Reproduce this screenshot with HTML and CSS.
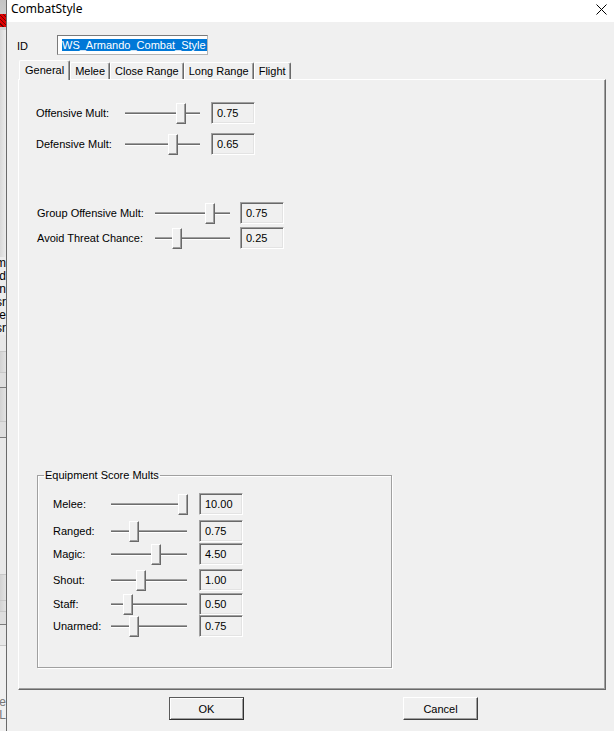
FILE: index.html
```html
<!DOCTYPE html>
<html lang="en">
<head>
  <meta charset="UTF-8" />
  <title>CombatStyle</title>
  <link rel="stylesheet" href="styles.css">
</head>
<body>
  <!-- sliver of the window behind the dialog -->
  <div class="behind">
    <div class="behind-top"><span class="red-icon"></span></div>
    <div class="behind-fill"></div>
    <div class="behind-text">
      <span>Item</span>
      <span>Grand</span>
      <span>MainIn</span>
      <span>Misr</span>
      <span>Table</span>
      <span>Usr</span>
    </div>
    <div class="cell" style="height:17px"></div>
    <div class="cell cell-grey" style="height:21px"></div>
    <div class="cell cell-dark" style="height:15px"></div>
    <div class="cell cell-grey" style="height:34px"></div>
    <div class="cell cell-dark" style="height:16px"></div>
    <div class="cell" style="height:137px"></div>
    <div class="cell cell-grey" style="height:26px"></div>
    <div class="cell cell-grey" style="height:11px"></div>
    <div class="cell cell-dark" style="height:13px"></div>
    <div class="cell" style="height:21px"></div>
    <div class="behind-text behind-bottom">
      <span>Page</span>
      <span>L</span>
    </div>
  </div>

  <div class="dialog">
    <div class="titlebar">
      <span class="title">CombatStyle</span>
      <svg class="close" width="11" height="11" viewBox="0 0 11 11">
        <path d="M0.5 0.5 L10.5 10.5 M10.5 0.5 L0.5 10.5" stroke="#000" stroke-width="1" fill="none"/>
      </svg>
    </div>

    <div class="content">
      <div class="id-row">
        <span class="id-label">ID</span>
        <div class="id-input"><span class="selected">WS_Armando_Combat_Style</span></div>
      </div>

      <div class="tabs">
        <div class="tab active">General</div>
        <div class="tab">Melee</div>
        <div class="tab">Close Range</div>
        <div class="tab">Long Range</div>
        <div class="tab">Flight</div>
      </div>

      <div class="panel">
        <div class="row">
          <span class="label">Offensive Mult:</span>
          <div class="slider"><div class="track"></div><div class="thumb" style="left:51px"></div></div>
          <div class="value">0.75</div>
        </div>
        <div class="row row-next">
          <span class="label">Defensive Mult:</span>
          <div class="slider"><div class="track"></div><div class="thumb" style="left:43px"></div></div>
          <div class="value">0.65</div>
        </div>

        <div class="row row-wide row-section">
          <span class="label">Group Offensive Mult:</span>
          <div class="slider"><div class="track"></div><div class="thumb" style="left:50px"></div></div>
          <div class="value">0.75</div>
        </div>
        <div class="row row-wide row-close">
          <span class="label">Avoid Threat Chance:</span>
          <div class="slider"><div class="track"></div><div class="thumb" style="left:17px"></div></div>
          <div class="value">0.25</div>
        </div>

        <fieldset class="group">
          <legend>Equipment Score Mults</legend>
          <div class="group-rows">
            <div class="row">
              <span class="label">Melee:</span>
              <div class="slider"><div class="track"></div><div class="thumb" style="left:67px"></div></div>
              <div class="value">10.00</div>
            </div>
            <div class="row">
              <span class="label">Ranged:</span>
              <div class="slider"><div class="track"></div><div class="thumb" style="left:18px"></div></div>
              <div class="value">0.75</div>
            </div>
            <div class="row">
              <span class="label">Magic:</span>
              <div class="slider"><div class="track"></div><div class="thumb" style="left:40px"></div></div>
              <div class="value">4.50</div>
            </div>
            <div class="row">
              <span class="label">Shout:</span>
              <div class="slider"><div class="track"></div><div class="thumb" style="left:25px"></div></div>
              <div class="value">1.00</div>
            </div>
            <div class="row">
              <span class="label">Staff:</span>
              <div class="slider"><div class="track"></div><div class="thumb" style="left:12px"></div></div>
              <div class="value">0.50</div>
            </div>
            <div class="row">
              <span class="label">Unarmed:</span>
              <div class="slider"><div class="track"></div><div class="thumb" style="left:18px"></div></div>
              <div class="value">0.75</div>
            </div>
          </div>
        </fieldset>
      </div>

      <div class="buttons">
        <button class="btn btn-default">OK</button>
        <button class="btn">Cancel</button>
      </div>
    </div>
  </div>
</body>
</html>
```

FILE: styles.css
```css
* {
  box-sizing: border-box;
}

html, body {
  margin: 0;
  padding: 0;
}

body {
  display: flex;
  height: 731px;
  overflow: hidden;
  font-family: "Liberation Sans", Arial, sans-serif;
  font-size: 11px;
  color: #000;
  background: #f0f0f0;
}

/* window behind the dialog */
.behind {
  width: 7px;
  flex: none;
  display: flex;
  flex-direction: column;
  overflow: hidden;
  background: #e4e4e4;
  border-right: 1px solid #6a6a6a;
}

.behind-top {
  height: 30px;
  background: linear-gradient(#c4c4c4, #d2d2d2);
}

.red-icon {
  display: block;
  margin-top: 14px;
  height: 13px;
  background: repeating-linear-gradient(45deg, #e00000 0 2px, #700000 2px 3px);
}

.behind-fill {
  height: 227px;
  background: linear-gradient(90deg, #d8d8d8, #ececec);
}

.behind-text {
  display: flex;
  flex-direction: column;
  font-size: 12px;
  line-height: 13px;
  background: #ececec;
}

.behind-text span {
  display: flex;
  justify-content: flex-end;
  white-space: nowrap;
}

.behind-bottom {
  flex: 1;
  padding-top: 50px;
  color: #777;
  background: #f0f0f0;
}

.cell {
  flex: none;
  background: #e8e8e8;
  border-bottom: 1px solid #c8c8c8;
}

.cell-grey {
  background: linear-gradient(90deg, #d2d2d2, #e2e2e2);
}

.cell-dark {
  background: #dedede;
  border-bottom: 1px solid #7c7c7c;
}

/* dialog */
.dialog {
  flex: 1;
  min-width: 0;
  display: flex;
  flex-direction: column;
}

.titlebar {
  height: 22px;
  flex: none;
  display: flex;
  align-items: flex-start;
  justify-content: space-between;
  padding: 0 7px 0 4px;
  background: #fff;
}

.title {
  font-family: "Noto Sans", "Open Sans", sans-serif;
  font-size: 12px;
  line-height: 18px;
}

.close {
  margin-top: 4px;
}

.content {
  flex: 1;
  padding: 0 8px 0 11px;
}

.id-row {
  display: flex;
  align-items: center;
  height: 20px;
  margin-top: 13px;
}

.id-label {
  width: 40px;
  margin-left: -1px;
  padding-top: 1px;
}

.id-input {
  width: 151px;
  height: 20px;
  padding: 3px 0 0 4px;
  background: #fff;
  border: 1px solid #7a7a7a;
  border-right-color: #b5b5b5;
  border-bottom-color: #b5b5b5;
}

.selected {
  display: inline-block;
  line-height: 12px;
  padding-right: 1px;
  color: #fff;
  background: #0078d7;
}

/* tabs */
.tabs {
  display: flex;
  align-items: flex-end;
  height: 19px;
  margin-top: 5px;
  margin-left: 1px;
}

.tab {
  height: 17px;
  padding: 0 4px;
  line-height: 16px;
  white-space: nowrap;
  border: 1px solid #fff;
  border-right-color: #696969;
  border-bottom: none;
  border-radius: 2px 2px 0 0;
  box-shadow: inset -1px 0 #a0a0a0;
}

.tab.active {
  position: relative;
  z-index: 1;
  height: 20px;
  margin-bottom: -1px;
  padding: 0 5px;
  line-height: 18px;
  background: #f0f0f0;
}

.panel {
  height: 611px;
  padding: 22px 0 0 17px;
  border: 1px solid #fff;
  border-right-color: #696969;
  border-bottom-color: #696969;
  box-shadow: inset -1px -1px #a0a0a0;
}

/* slider rows */
.row {
  display: flex;
  align-items: center;
  height: 22px;
}

.row-next {
  margin-top: 9px;
}

.row-section {
  margin-top: 47px;
}

.row-close {
  margin-top: 3px;
}

.label {
  width: 89px;
  flex: none;
  white-space: nowrap;
}

.row-wide {
  margin-left: 1px;
}

.row-wide .label {
  width: 118px;
}

.slider {
  position: relative;
  width: 75px;
  height: 22px;
  margin-right: 11px;
  display: flex;
  align-items: center;
}

.row-wide .slider {
  margin-right: 10px;
}

.track {
  width: 100%;
  height: 3px;
  background: #6d6d6d;
  border-top: 1px solid #a0a0a0;
  border-bottom: 1px solid #fff;
}

.thumb {
  position: absolute;
  top: 1px;
  width: 10px;
  height: 21px;
  background: #f0f0f0;
  border: 1px solid #fff;
  border-right-color: #696969;
  border-bottom-color: #696969;
  box-shadow: inset -1px -1px #a0a0a0;
}

.value {
  width: 44px;
  height: 22px;
  padding-left: 5px;
  line-height: 20px;
  border: 1px solid #a0a0a0;
  border-right-color: #fff;
  border-bottom-color: #fff;
  box-shadow: inset 1px 1px #696969, inset -1px -1px #e3e3e3;
}

/* equipment group */
.group {
  width: 355px;
  height: 199px;
  margin: 220px 0 0 1px;
  padding: 0;
  border: 1px solid #a0a0a0;
  box-shadow: inset 1px 1px #fff, 1px 1px #fff;
}

.group legend {
  margin-left: 6px;
  padding: 0 1px;
  line-height: 13px;
}

.group-rows {
  padding: 11px 0 0 15px;
}

.group .label {
  width: 58px;
}

.group .slider {
  width: 76px;
  margin-right: 12px;
}

.group-rows .row:nth-child(2) { margin-top: 5px; }
.group-rows .row:nth-child(3) { margin-top: 1px; }
.group-rows .row:nth-child(4) { margin-top: 4px; }
.group-rows .row:nth-child(5) { margin-top: 2px; }

/* buttons */
.buttons {
  display: flex;
  gap: 159px;
  margin-top: 7px;
  padding-left: 151px;
}

.btn {
  width: 75px;
  height: 23px;
  padding: 0;
  font-family: "Liberation Sans", Arial, sans-serif;
  font-size: 11px;
  color: #000;
  background: #f0f0f0;
  border: 1px solid #fff;
  border-right-color: #404040;
  border-bottom-color: #404040;
  box-shadow: inset -1px -1px #a0a0a0;
}

.btn-default {
  border-color: #5a5a5a #303030 #303030 #5a5a5a;
  box-shadow: inset 1px 1px #fff, inset -1px -1px #a0a0a0;
}
```
